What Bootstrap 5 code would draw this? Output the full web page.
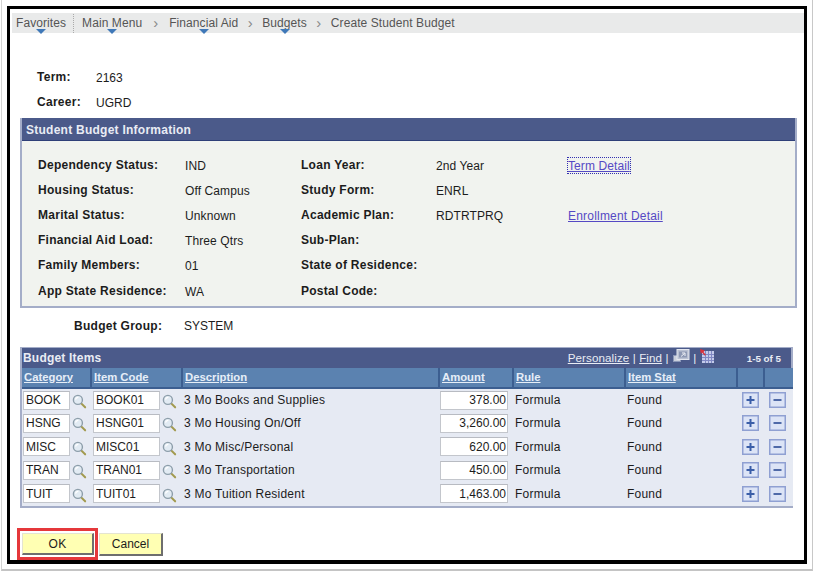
<!DOCTYPE html>
<html lang="en">
<head>
<meta charset="utf-8">
<title>Create Student Budget</title>
<link rel="stylesheet" href="https://cdn.jsdelivr.net/npm/bootstrap@5.3.0/dist/css/bootstrap.min.css">
<style>
html,body{height:100%;margin:0;background:#fff;overflow:hidden}
body{font-family:"Liberation Sans",Arial,sans-serif;font-size:12px;color:#1c1c1c;line-height:14px}
.shot-edge{width:812px;height:571px;border-left:1px solid #d4d4d4;border-right:1px solid #c8c8c8;border-bottom:2px solid #c4c4c4;padding:6px 2px 5px 5px;margin-left:1px}
.frame{width:800px;height:558px;border:3px solid #000;border-bottom-width:4px;background:#fff;overflow:hidden}
.crumbs{height:20px;margin:4px 0 0 2px;background:#e9eaea;color:#555;font-size:12px;letter-spacing:.08px}
.crumb{position:relative;line-height:18px;white-space:nowrap}
.crumb.drop::after{content:"";position:absolute;left:50%;bottom:-2px;margin-left:-5px;border:5px solid transparent;border-top:5px solid #3f78b8;border-bottom:0}
.chev{width:24px;text-align:center;color:#888;font-size:15px;line-height:16px}
.chev.wide{width:27px}
.vbar{width:1px;height:19px;border-left:1px dotted #aaa;margin:0 8px 0 7px}
.lbl{font-weight:700;color:#1c1c1c;letter-spacing:.27px}
.termblock{padding:37px 0 0 27px;height:85px}
.termline{height:25px;display:flex}
.termline .lbl{width:59px}
.termline span:last-child{padding-top:1px}
.panel-a{margin:0 0 0 10px;width:777px;border:0;border-radius:0;background:#f1f3ef;border-right:2px solid #a4adc8;border-bottom:2px solid #a4adc8;border-left:2px solid #a4adc8}
.panel-a .panel-head{height:23px;background:#4b5a8a;color:#e9ecf4;font-weight:700;padding:5px 0 0 4px;border:0;border-bottom:1px solid #2f3f78;border-radius:0;letter-spacing:.25px}
.panel-body{height:165px;padding:11.5px 0 0 16px}
.info-row{display:flex;height:25.1px;align-items:center;letter-spacing:.1px}
.info-row>span:not(.lbl){padding-top:2px}
.c1{width:147px}.c2{width:116px}.c3{width:135px}.c4{width:132px}
.info-link{color:#5549c4;text-decoration:underline;letter-spacing:.2px;padding-top:1px}
.focus-link{outline:1px dotted #3330b0;outline-offset:0;letter-spacing:.1px}
.group-row{display:flex;padding:11px 0 0 64px;height:39px}
.group-row .lbl{width:110px}
.panel-b{margin-left:10px;width:773px;border:1px solid #a4adc8;border-width:0 2px 2px 2px;background:#e6eaf3}
.grid-title{height:21px;background:#4b5a8a;color:#e9ecf4;font-weight:700;display:flex;justify-content:space-between;align-items:center;padding:0 0 0 1px;letter-spacing:.2px;border-top:1px solid #a4adc8}
.tools{font-weight:400;display:flex;align-items:center;color:#e9ecf4;font-size:11.6px;letter-spacing:.1px}
.tools a{color:#e9ecf4;text-decoration:underline}
.tools svg{margin-top:-5px;flex:none}
.count{font-size:9.8px;font-weight:700;margin:2px 10px 0 33px;letter-spacing:0}
.tblitems{width:771px;table-layout:fixed;border-collapse:collapse;margin:0}
.tblitems th{height:20px;padding:0 0 2px 2px;background:#5b82b0;border-right:2px solid #3c5e90;border-bottom:2px solid #3c5e90;vertical-align:middle;font-weight:700;font-size:11.3px;line-height:12px}
.tblitems th:last-child{border-right:0}
.tblitems th a{color:#e6eef8;text-decoration:underline}
.tblitems td{height:23.5px;padding:0 0 0 2px;vertical-align:middle;white-space:nowrap;color:#1c1c1c;background:#e6eaf3;letter-spacing:.22px}
.tblitems td:first-child{padding-left:1px}
.cellflex{display:flex;align-items:center}
.fld{display:block;height:19px;padding:0 0 0 2px;border:1px solid #c3c6cc;border-top-color:#b8bbc2;border-radius:0;background:#fff;color:#1c1c1c;font:12px/15px "Liberation Sans",Arial,sans-serif;box-shadow:none;min-height:0}
.w-a{width:47px}.w-b{width:67px}.w-c{width:68px;text-align:right;padding-right:1px;margin-left:-1px}
.mag{margin:3px 0 0 2px;flex:none}
.w-a + .mag{margin-left:2px}
.pm{display:block;margin-left:3px}
.btnrow{display:flex;align-items:flex-start;padding:20px 0 0 7px}
.hilite{border:3px solid #e5383b;padding:2px 1px 2px 2px;display:flex;margin-right:1px}
.psbtn{background:#ffffb3;border:1px solid #e4e4d0;border-right:2px solid #6e6e6e;border-bottom:2px solid #6e6e6e;border-radius:0;font-size:12px;line-height:14px;color:#1c1c1c;padding:0;height:23px}
.psbtn.ok{width:72px;height:22px;letter-spacing:.3px;padding-top:1px}.psbtn.can{width:64px;margin-top:5px;padding-top:1px}
</style>
</head>
<body>
<svg width="0" height="0" class="d-block" style="position:absolute" aria-hidden="true">
<defs>
<symbol id="m" viewBox="0 0 16 16"><line x1="9.8" y1="10" x2="14" y2="14.2" stroke="#a29a4e" stroke-width="2.2" stroke-linecap="round"/><circle cx="6.3" cy="6.3" r="4.8" fill="#e2ebf3" stroke="#8d9eaa" stroke-width="1.5"/><path d="M3.8 6a3 3 0 0 1 3-2.4" fill="none" stroke="#fff" stroke-width="1.2"/></symbol>
<symbol id="p" viewBox="0 0 17 16"><rect x=".75" y=".75" width="15.5" height="14.5" fill="#dce4f6" stroke="#8fa0d2" stroke-width="1.5"/><path d="M8.5 4v8M4.5 8h8" stroke="#3a5ea8" stroke-width="2"/></symbol>
<symbol id="n" viewBox="0 0 17 16"><rect x=".75" y=".75" width="15.5" height="14.5" fill="#dce4f6" stroke="#8fa0d2" stroke-width="1.5"/><path d="M4.5 8h8" stroke="#4f6aa8" stroke-width="2"/></symbol>
</defs>
</svg>
<div class="shot-edge">
<main class="frame">
<nav class="crumbs d-flex align-items-center ps-1">
<span class="crumb drop">Favorites</span><span class="vbar"></span>
<span class="crumb drop">Main Menu</span><span class="chev wide">&#8250;</span>
<span class="crumb drop">Financial Aid</span><span class="chev">&#8250;</span>
<span class="crumb drop">Budgets</span><span class="chev">&#8250;</span>
<span class="crumb">Create Student Budget</span>
</nav>
<section class="termblock">
<div class="termline"><span class="lbl">Term:</span><span>2163</span></div>
<div class="termline"><span class="lbl">Career:</span><span>UGRD</span></div>
</section>
<section class="card panel-a">
<div class="card-header panel-head">Student Budget Information</div>
<div class="card-body panel-body">
<div class="info-row"><span class="lbl c1">Dependency Status:</span><span class="c2">IND</span><span class="lbl c3">Loan Year:</span><span class="c4">2nd Year</span><a class="info-link focus-link" href="#">Term Detail</a></div>
<div class="info-row"><span class="lbl c1">Housing Status:</span><span class="c2">Off Campus</span><span class="lbl c3">Study Form:</span><span class="c4">ENRL</span></div>
<div class="info-row"><span class="lbl c1">Marital Status:</span><span class="c2">Unknown</span><span class="lbl c3">Academic Plan:</span><span class="c4">RDTRTPRQ</span><a class="info-link" href="#">Enrollment Detail</a></div>
<div class="info-row"><span class="lbl c1">Financial Aid Load:</span><span class="c2">Three Qtrs</span><span class="lbl c3">Sub-Plan:</span></div>
<div class="info-row"><span class="lbl c1">Family Members:</span><span class="c2">01</span><span class="lbl c3">State of Residence:</span></div>
<div class="info-row"><span class="lbl c1">App State Residence:</span><span class="c2">WA</span><span class="lbl c3">Postal Code:</span></div>
</div>
</section>
<div class="group-row"><span class="lbl">Budget Group:</span><span>SYSTEM</span></div>
<section class="panel-b">
<div class="grid-title"><span>Budget Items</span>
<span class="tools"><a href="#">Personalize</a>&nbsp;|&nbsp;<a href="#">Find</a>&nbsp;|&nbsp;
<svg width="18" height="14" viewBox="0 0 18 14"><rect x="1" y="6" width="8" height="7" fill="#c9cedb"/><rect x="1.5" y="6.5" width="7" height="6" fill="none" stroke="#8b97b8"/><rect x="5" y=".5" width="12" height="10" fill="#b9c0d2" stroke="#e4e7ef"/><rect x="7" y="2.5" width="8" height="6" fill="#8d98b4"/><path d="M9 7.5l3.5-3M10 4h3v3" stroke="#eef0f6" fill="none"/></svg>&nbsp;|&nbsp;
<svg width="14" height="14" viewBox="0 0 14 14"><rect x="2" y="2" width="12" height="12" fill="#c4cbea"/><path d="M2 5.5h12M2 8.5h12M2 11.5h12M5.5 2v12M8.5 2v12M11.5 2v12" stroke="#8088c4"/><path d="M0 0l5 1.5L3.5 3l2.5 3L4.5 6.5l-2.5-3L.8 5z" fill="#d8323c"/></svg>
<span class="count">1-5 of 5</span></span></div>
<table class="tblitems">
<colgroup><col style="width:69px"><col style="width:91px"><col style="width:257px"><col style="width:74px"><col style="width:112px"><col style="width:112px"><col style="width:27px"><col style="width:29px"></colgroup>
<thead><tr><th><a href="#">Category</a></th><th><a href="#">Item Code</a></th><th><a href="#">Description</a></th><th><a href="#">Amount</a></th><th><a href="#">Rule</a></th><th><a href="#">Item Stat</a></th><th></th><th></th></tr></thead>
<tbody>
<tr><td><div class="cellflex"><input class="form-control fld w-a" value="BOOK" aria-label="Category"><svg class="mag" width="15" height="15"><use href="#m"/></svg></div></td><td><div class="cellflex"><input class="form-control fld w-b" value="BOOK01" aria-label="Item Code"><svg class="mag" width="15" height="15"><use href="#m"/></svg></div></td><td>3 Mo Books and Supplies</td><td><input class="form-control fld w-c" value="378.00" aria-label="Amount"></td><td>Formula</td><td>Found</td><td><svg class="pm" width="17" height="16"><use href="#p"/></svg></td><td><svg class="pm" width="17" height="16"><use href="#n"/></svg></td></tr>
<tr><td><div class="cellflex"><input class="form-control fld w-a" value="HSNG" aria-label="Category"><svg class="mag" width="15" height="15"><use href="#m"/></svg></div></td><td><div class="cellflex"><input class="form-control fld w-b" value="HSNG01" aria-label="Item Code"><svg class="mag" width="15" height="15"><use href="#m"/></svg></div></td><td>3 Mo Housing On/Off</td><td><input class="form-control fld w-c" value="3,260.00" aria-label="Amount"></td><td>Formula</td><td>Found</td><td><svg class="pm" width="17" height="16"><use href="#p"/></svg></td><td><svg class="pm" width="17" height="16"><use href="#n"/></svg></td></tr>
<tr><td><div class="cellflex"><input class="form-control fld w-a" value="MISC" aria-label="Category"><svg class="mag" width="15" height="15"><use href="#m"/></svg></div></td><td><div class="cellflex"><input class="form-control fld w-b" value="MISC01" aria-label="Item Code"><svg class="mag" width="15" height="15"><use href="#m"/></svg></div></td><td>3 Mo Misc/Personal</td><td><input class="form-control fld w-c" value="620.00" aria-label="Amount"></td><td>Formula</td><td>Found</td><td><svg class="pm" width="17" height="16"><use href="#p"/></svg></td><td><svg class="pm" width="17" height="16"><use href="#n"/></svg></td></tr>
<tr><td><div class="cellflex"><input class="form-control fld w-a" value="TRAN" aria-label="Category"><svg class="mag" width="15" height="15"><use href="#m"/></svg></div></td><td><div class="cellflex"><input class="form-control fld w-b" value="TRAN01" aria-label="Item Code"><svg class="mag" width="15" height="15"><use href="#m"/></svg></div></td><td>3 Mo Transportation</td><td><input class="form-control fld w-c" value="450.00" aria-label="Amount"></td><td>Formula</td><td>Found</td><td><svg class="pm" width="17" height="16"><use href="#p"/></svg></td><td><svg class="pm" width="17" height="16"><use href="#n"/></svg></td></tr>
<tr><td><div class="cellflex"><input class="form-control fld w-a" value="TUIT" aria-label="Category"><svg class="mag" width="15" height="15"><use href="#m"/></svg></div></td><td><div class="cellflex"><input class="form-control fld w-b" value="TUIT01" aria-label="Item Code"><svg class="mag" width="15" height="15"><use href="#m"/></svg></div></td><td>3 Mo Tuition Resident</td><td><input class="form-control fld w-c" value="1,463.00" aria-label="Amount"></td><td>Formula</td><td>Found</td><td><svg class="pm" width="17" height="16"><use href="#p"/></svg></td><td><svg class="pm" width="17" height="16"><use href="#n"/></svg></td></tr>
</tbody>
</table>
</section>
<div class="btnrow">
<div class="hilite"><button type="button" class="btn psbtn ok">OK</button></div>
<button type="button" class="btn psbtn can">Cancel</button>
</div>
</main>
</div>
</body>
</html>
